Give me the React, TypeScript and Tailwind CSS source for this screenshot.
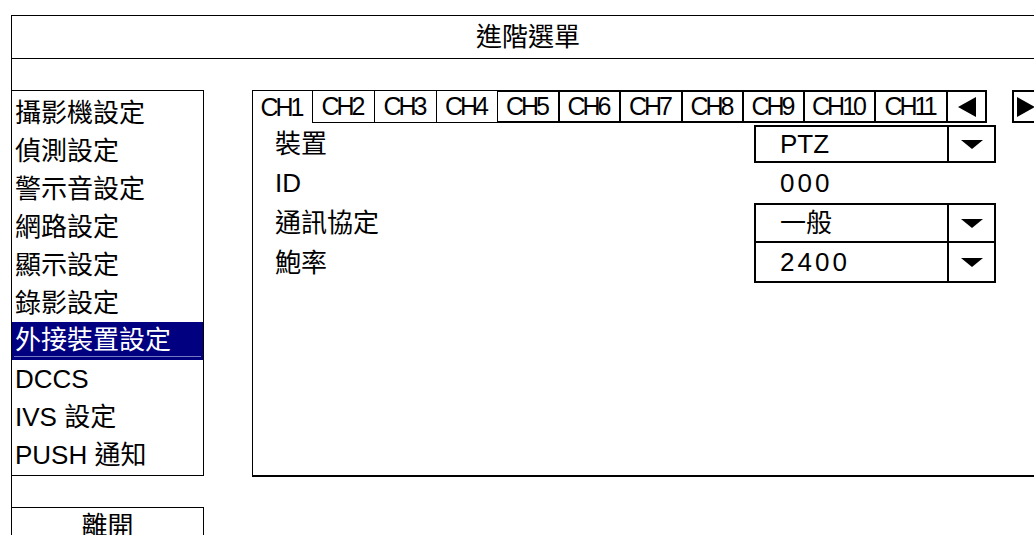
import React from 'react'

const font = { fontFamily: '"Liberation Sans", "Noto Sans CJK TC", sans-serif' }

const menuItems = ['攝影機設定', '偵測設定', '警示音設定', '網路設定', '顯示設定', '錄影設定', '外接裝置設定', 'DCCS', 'IVS 設定', 'PUSH 通知']

const tabs = [
    { label: 'CH1', w: 'w-[60px]', thick: false, active: true },
    { label: 'CH2', w: 'w-[62px]', thick: false },
    { label: 'CH3', w: 'w-[62px]', thick: false },
    { label: 'CH4', w: 'w-[61px]', thick: false },
    { label: 'CH5', w: 'w-[62px]', thick: true },
    { label: 'CH6', w: 'w-[61px]', thick: true },
    { label: 'CH7', w: 'w-[62px]', thick: true },
    { label: 'CH8', w: 'w-[61px]', thick: true },
    { label: 'CH9', w: 'w-[61px]', thick: true },
    { label: 'CH10', w: 'w-[71px]', thick: true },
    { label: 'CH11', w: 'w-[72px]', thick: true },
]

function DownArrow() {
    return (
        <svg width="22" height="9" viewBox="0 0 22 9">
            <polygon points="0,0 22,0 11,9" fill="black" />
        </svg>
    )
}

function Dropdown({ value, numeric, noTop }: { value: string; numeric?: boolean; noTop?: boolean }) {
    return (
        <div className={`w-[242px] h-full flex border-2 border-black ${noTop ? 'border-t-0' : ''}`}>
            <span className={`flex-1 flex items-center pl-[24px] ${numeric ? 'tracking-[3px]' : ''}`}>{value}</span>
            <div className="w-[47px] border-l-2 border-black flex items-center justify-center">
                <DownArrow />
            </div>
        </div>
    )
}

export default function App() {
    return (
        <div className="w-[1034px] h-[535px] bg-white overflow-hidden pt-[15px] pl-[11px] text-black text-[26px] leading-none" style={font}>
            <div className="h-[600px] border-l border-t border-black">
                {/* Header */}
                <div className="h-[43px] border-b border-black flex items-center justify-center pl-[10px]">
                    進階選單
                </div>

                {/* Body */}
                <div className="flex pt-[31px]">
                    {/* Left menu */}
                    <div className="w-[192px] shrink-0">
                        <div className="border-t border-r border-b border-black pt-[3px] pb-[1px]">
                            {menuItems.map((item, i) =>
                                i === 6 ? (
                                    <div key={item} className="h-[38px] bg-[#000080] text-white px-[2px] pt-[2px]">
                                        <div className="h-[33px] flex items-center pl-[1px] border-b border-[#7878c0]">{item}</div>
                                    </div>
                                ) : (
                                    <div key={item} className="h-[38px] flex items-center pl-[3px]">{item}</div>
                                )
                            )}
                        </div>
                        <div className="mt-[31px] h-[60px] border-t border-r border-black flex justify-center pt-[5px]">
                            離開
                        </div>
                    </div>

                    {/* Right panel */}
                    <div className="ml-[48px] flex-1 h-[387px] border-l border-b-2 border-black">
                        {/* Channel tabs */}
                        <div className="flex h-[33px] text-[25px] tracking-[-3px]">
                            {tabs.map(t => (
                                <div
                                    key={t.label}
                                    className={`${t.w} shrink-0 flex items-center justify-center pr-[3px] border-black ${t.thick ? 'border-t-2 border-r-2 border-b-2' : t.active ? 'border-t border-r' : 'border-t border-r border-b'}`}
                                >
                                    {t.label}
                                </div>
                            ))}
                            <div className="w-[39px] shrink-0 flex items-center justify-center border-t-2 border-r-2 border-b-2 border-black">
                                <svg width="18" height="20" viewBox="0 0 18 20"><polygon points="18,0 18,20 0,10" fill="black" /></svg>
                            </div>
                            <div className="w-[25px] shrink-0" />
                            <div className="flex-1 flex items-center pl-[3px] border-t-2 border-l-2 border-b-2 border-black">
                                <svg width="18" height="20" viewBox="0 0 18 20"><polygon points="0,0 0,20 18,10" fill="black" /></svg>
                            </div>
                        </div>

                        {/* Settings */}
                        <div className="grid grid-cols-[501px_242px] pt-[2px]">
                            <div className="h-[38px] flex items-center pl-[22px]">裝置</div>
                            <Dropdown value="PTZ" />

                            <div className="h-[40px] flex items-center pl-[22px]">ID</div>
                            <div className="h-[40px] flex items-center pl-[26px] tracking-[3px]">000</div>

                            <div className="h-[40px] flex items-center pl-[22px]">通訊協定</div>
                            <Dropdown value="一般" />

                            <div className="h-[40px] flex items-center pl-[22px]">鮑率</div>
                            <Dropdown value="2400" numeric noTop />
                        </div>
                    </div>
                </div>
            </div>
        </div>
    )
}
